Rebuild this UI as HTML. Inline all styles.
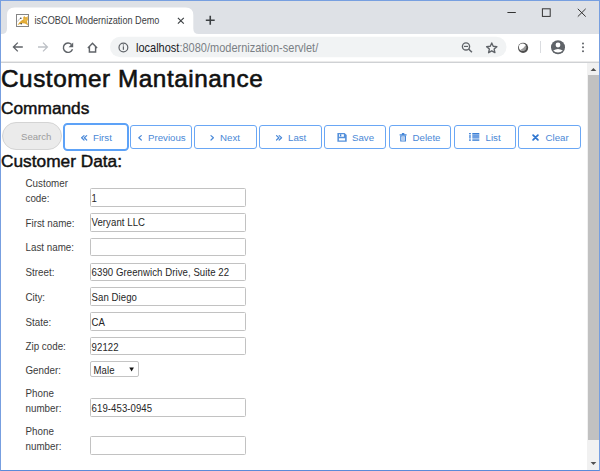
<!DOCTYPE html>
<html><head><meta charset="utf-8">
<style>
*{box-sizing:border-box;margin:0;padding:0}
html,body{width:600px;height:471px;overflow:hidden;background:#fff;font-family:"Liberation Sans",sans-serif}
.a{position:absolute}
.t{position:absolute;white-space:pre;line-height:1}
#frame{left:0;top:0;width:600px;height:471px;border:1px solid #779fe0;border-bottom-color:#5b8bd9}
#strip{left:1px;top:1px;width:598px;height:32px;background:#dee1e6}
#tab{left:7px;top:7px;width:186px;height:27px;background:#fff;border-radius:7px 7px 0 0}
#toolbar{left:1px;top:33px;width:598px;height:28px;background:#fff}
#tbline{left:1px;top:61px;width:598px;height:1px;background:#d7d9dc}
#omni{left:110px;top:37px;width:397px;height:21px;background:#f1f3f4;border-radius:11px}
.btn{position:absolute;top:125px;width:62px;height:24px;border:1px solid #6aa7f5;border-radius:3px;background:#fff}
.bl{position:absolute;white-space:pre;line-height:1;font-size:9.7px;color:#4a88d6;top:132.6px}
.lbl{position:absolute;white-space:pre;line-height:1;font-size:9.8px;color:#3b3b3b;transform:scaleY(1.13);transform-origin:0 8.3px}
.inp{position:absolute;left:90px;width:155.7px;height:18.5px;border:1px solid #c2c2c2;border-radius:1.5px;background:#fff}
.val{position:absolute;white-space:pre;line-height:1;font-size:9.6px;color:#262626;letter-spacing:0.07px;transform:scaleY(1.1);transform-origin:0 8.1px}
</style></head>
<body>
<svg class="a" style="left:0;top:0" width="600" height="63" viewBox="0 0 600 63">
<rect x="1" y="1" width="598" height="33" fill="#dee1e6"/>
<path d="M1 34 L1.5 34 Q7 34 7 28.5 L7 15 Q7 7.4 14.6 7.4 L185.7 7.4 Q193.3 7.4 193.3 15 L193.3 28.5 Q193.3 34 198.8 34 L599 34 L599 62 L1 62 Z" fill="#fff"/>
<rect x="1" y="61" width="598" height="1" fill="#ebebeb"/>
<rect x="1" y="62" width="598" height="1" fill="#cfd1d4"/>
<!-- favicon -->
<rect x="16.5" y="14.5" width="12" height="12" fill="#fff" stroke="#858585" stroke-width="1"/>
<path d="M23.2 17.6 L24.2 15.9 L25.4 17.3 L26.5 17.3 L27.6 16 L27.9 19.5 L27 21.8 L28.3 25.6 L25 23.6 L22.5 23.2 Q20 23.6 17.4 25.3 Q19.2 22 21.5 20.6 L23.4 19.6 Z" fill="#e0a935"/>
<path d="M24 18.5 L27 18.6 L26.5 21.5 L24.5 21.8 Z" fill="#f0c050" opacity="0.7"/>
<path d="M17.6 21.6 Q18.8 19 20.6 18.3" stroke="#999" stroke-width="0.6" fill="none"/>
<circle cx="20.8" cy="18.2" r="0.75" fill="#333"/>
<circle cx="21.2" cy="23.8" r="0.75" fill="#333"/>
<!-- tab close -->
<path d="M177.9 17.8 L183.8 23.7 M183.8 17.8 L177.9 23.7" stroke="#3c4043" stroke-width="1.15" fill="none"/>
<!-- new tab + -->
<path d="M210.25 15.8 V24.7 M205.8 20.25 H214.7" stroke="#3c4043" stroke-width="1.6" fill="none"/>
<!-- window controls -->
<rect x="507.4" y="12" width="8.4" height="1" fill="#333"/>
<rect x="542.4" y="8.8" width="7.8" height="7.6" fill="none" stroke="#333" stroke-width="1"/>
<path d="M577.8 8.8 L585.7 16.6 M585.7 8.8 L577.8 16.6" stroke="#333" stroke-width="1" fill="none"/>
<!-- nav icons -->
<path d="M22.8 47 H13.6 M17.8 42.6 L13.4 47 L17.8 51.4" stroke="#5f6368" stroke-width="1.3" fill="none"/>
<path d="M38 47 H47.2 M43 42.6 L47.4 47 L43 51.4" stroke="#bdc1c6" stroke-width="1.3" fill="none"/>
<path d="M71.5 44.4 A4.7 4.7 0 1 0 72.5 49.3" stroke="#5f6368" stroke-width="1.45" fill="none"/>
<path d="M73.2 42.6 V47.2 H68.6 Z" fill="#5f6368"/>
<path d="M87.9 47.9 L92.5 43.3 L97.1 47.9 M89.4 46.5 V52 H95.6 V46.5" stroke="#5f6368" stroke-width="1.45" fill="none" stroke-linejoin="miter"/>
<!-- omnibox -->
<rect x="110" y="36.8" width="396.5" height="20.4" rx="10.2" fill="#f1f3f4"/>
<circle cx="123.4" cy="47.5" r="4.4" fill="none" stroke="#5f6368" stroke-width="1.2"/>
<rect x="122.8" y="46.3" width="1.2" height="3.5" fill="#5f6368"/>
<rect x="122.8" y="44.4" width="1.2" height="1.1" fill="#5f6368"/>
<!-- zoom icon -->
<circle cx="466" cy="46.4" r="3.6" fill="none" stroke="#5f6368" stroke-width="1.35"/>
<path d="M468.6 49 L471.9 52.3" stroke="#5f6368" stroke-width="1.5"/>
<path d="M464 46.4 H468" stroke="#5f6368" stroke-width="1.15"/>
<!-- star -->
<path d="M491.75 42.90 L493.22 46.28 L496.89 46.63 L494.13 49.07 L494.92 52.67 L491.75 50.80 L488.58 52.67 L489.37 49.07 L486.61 46.63 L490.28 46.28 Z" fill="none" stroke="#5f6368" stroke-width="1.35" stroke-linejoin="round"/>
<!-- extension ball -->
<circle cx="523.1" cy="47.8" r="5.1" fill="#4d4d4d"/>
<circle cx="522.5" cy="47.1" r="3.6" fill="#fff"/>
<path d="M525.6 45.2 A3.6 3.6 0 0 1 520.3 50 Q523.6 48.6 525.6 45.2 Z" fill="#9a9a9a"/>
<rect x="540" y="41" width="1" height="12" fill="#dadce0"/>
<!-- profile -->
<circle cx="558" cy="47.3" r="7" fill="#5f6368"/>
<circle cx="558" cy="45" r="2.4" fill="#fff"/>
<path d="M553.2 50.6 Q558 47.6 562.8 50.6 Q560.9 52.6 558 52.6 Q555.1 52.6 553.2 50.6 Z" fill="#fff"/>
<circle cx="583" cy="43.5" r="1" fill="#5f6368"/>
<circle cx="583" cy="47.3" r="1" fill="#5f6368"/>
<circle cx="583" cy="51.2" r="1" fill="#5f6368"/>
</svg>
<div class="t" style="left:34.5px;top:16.3px;font-size:9.15px;color:#3c4043;transform:scaleY(1.13);transform-origin:0 0">isCOBOL Modernization Demo</div>
<div class="t" style="left:136px;top:43.1px;font-size:11px;color:#202124;transform:scaleY(1.08);transform-origin:0 9.3px">localhost<span style="color:#7a7f85">:8080/modernization-servlet/</span></div>

<!-- headings -->
<div class="t" style="left:1px;top:67.4px;font-size:24.3px;letter-spacing:0.55px;color:#111;-webkit-text-stroke:0.6px #111">Customer Mantainance</div>
<div class="t" style="left:1px;top:100.2px;font-size:17.3px;color:#111;-webkit-text-stroke:0.45px #111">Commands</div>
<div class="t" style="left:1px;top:153.4px;font-size:17.3px;color:#111;-webkit-text-stroke:0.45px #111">Customer Data:</div>

<!-- search pill -->
<div class="a" style="left:1.5px;top:122.3px;width:60.5px;height:27.5px;border:1px solid #d4d4d4;border-radius:14px;background:#ebebeb"></div>
<div class="t" style="left:21px;top:132px;font-size:9.6px;color:#9c9c9c">Search</div>

<!-- buttons -->
<div class="a" style="left:63px;top:123px;width:66px;height:28px;border:2px solid #5da2f7;border-radius:4.5px;box-shadow:inset 0 0 0 0.6px rgba(93,162,247,.55)"></div>
<div class="btn" style="left:65.3px;border-color:transparent"></div>
<div class="btn" style="left:130px;width:62px"></div>
<div class="btn" style="left:194px;width:63px"></div>
<div class="btn" style="left:259px;width:63px"></div>
<div class="btn" style="left:324px;width:62px"></div>
<div class="btn" style="left:389px;width:62px"></div>
<div class="btn" style="left:454px;width:62px"></div>
<div class="btn" style="left:518px;width:63px"></div>

<div class="bl" style="left:93px">First</div>
<div class="bl" style="left:148px">Previous</div>
<div class="bl" style="left:220px">Next</div>
<div class="bl" style="left:288px">Last</div>
<div class="bl" style="left:352px">Save</div>
<div class="bl" style="left:412.5px">Delete</div>
<div class="bl" style="left:485.5px">List</div>
<div class="bl" style="left:545.5px">Clear</div>

<svg class="a" style="left:0;top:120px" width="600" height="35" viewBox="0 120 600 35">
<g fill="none" stroke="#4a89d8" stroke-width="1.2" stroke-linecap="round" stroke-linejoin="round">
<path d="M84 135.6 L81.6 137.8 L84 140 M86.7 135.6 L84.3 137.8 L86.7 140"/>
<path d="M141.3 135.6 L138.8 137.8 L141.3 140"/>
<path d="M211 135.6 L213.4 137.8 L211 140"/>
<path d="M276.5 135.6 L278.9 137.8 L276.5 140 M279.2 135.6 L281.6 137.8 L279.2 140"/>
</g>
<path d="M337.4 133 H344.6 L346.7 135.1 V141.8 H337.4 Z M339 134.3 V136.7 H343.9 V134.3 Z M338.9 138.3 V140.5 H345.1 V138.3 Z" fill="#5591db" fill-rule="evenodd"/>
<rect x="339.9" y="134.3" width="1.4" height="2.1" fill="#3f7fd3"/>
<path d="M401.9 133.1 H404.3 V134.3 H406.6 V135.6 H399.6 V134.3 H401.9 Z" fill="#4586d8"/>
<path d="M400.2 135.6 H406 V141.6 H400.2 Z M401.4 136.6 V140.5 H404.8 V136.6 Z" fill="#4586d8" fill-rule="evenodd"/>
<rect x="401.4" y="136.6" width="3.4" height="3.9" fill="#b4cdef"/>
<rect x="469" y="133" width="1.9" height="1.3" fill="#4a88d6"/>
<rect x="469" y="135" width="1.9" height="3.6" fill="#7aa9e6"/>
<rect x="469" y="139.4" width="1.9" height="1.4" fill="#4a88d6"/>
<rect x="472.3" y="133" width="7" height="1.3" fill="#3a7fd5"/>
<rect x="472.3" y="134.3" width="7" height="4.3" fill="#6d9fe2"/>
<rect x="472.3" y="139.4" width="7" height="1.4" fill="#3a7fd5"/>
<path d="M533.1 135.2 L537.9 139.8 M537.9 135.2 L533.1 139.8" stroke="#2f76d0" stroke-width="1.8" stroke-linecap="round"/>
</svg>

<!-- labels -->
<div class="lbl" style="left:25.5px;top:179.1px">Customer</div>
<div class="lbl" style="left:25.5px;top:193.6px">code:</div>
<div class="lbl" style="left:25.5px;top:218.6px">First name:</div>
<div class="lbl" style="left:25.5px;top:243.3px">Last name:</div>
<div class="lbl" style="left:25.5px;top:268.1px">Street:</div>
<div class="lbl" style="left:25.5px;top:292.9px">City:</div>
<div class="lbl" style="left:25.5px;top:317.6px">State:</div>
<div class="lbl" style="left:25.5px;top:342.4px">Zip code:</div>
<div class="lbl" style="left:25.5px;top:366.1px">Gender:</div>
<div class="lbl" style="left:25.5px;top:389.4px">Phone</div>
<div class="lbl" style="left:25.5px;top:403.9px">number:</div>
<div class="lbl" style="left:25.5px;top:427.3px">Phone</div>
<div class="lbl" style="left:25.5px;top:441.8px">number:</div>

<!-- inputs -->
<div class="inp" style="top:188px"></div>
<div class="inp" style="top:213px"></div>
<div class="inp" style="top:237.8px"></div>
<div class="inp" style="top:262.6px"></div>
<div class="inp" style="top:287.3px"></div>
<div class="inp" style="top:312px"></div>
<div class="inp" style="top:336.8px"></div>
<div class="a" style="left:90.2px;top:361.2px;width:48.8px;height:16px;border:1px solid #c4c4c4;border-radius:2px;background:#fff"></div>
<div class="inp" style="top:398.2px"></div>
<div class="inp" style="top:436.2px"></div>

<div class="val" style="left:91.6px;top:193.5px">1</div>
<div class="val" style="left:91.5px;top:218.3px">Veryant LLC</div>
<div class="val" style="left:91.6px;top:268.1px">6390 Greenwich Drive, Suite 22</div>
<div class="val" style="left:91.6px;top:292.9px">San Diego</div>
<div class="val" style="left:91.6px;top:317.7px">CA</div>
<div class="val" style="left:91.6px;top:342.5px">92122</div>
<div class="val" style="left:93.5px;top:366.0px">Male</div>
<div class="val" style="left:91.6px;top:404.0px">619-453-0945</div>

<svg class="a" style="left:120px;top:360px" width="20" height="20" viewBox="120 360 20 20"><path d="M129.3 367.4 H133.9 L131.6 371.6 Z" fill="#111"/></svg>
<!-- scrollbar -->
<div class="a" style="left:587px;top:63px;width:12px;height:407px;background:#f1f1f1"></div>
<div class="a" style="left:588px;top:75px;width:10.5px;height:365px;background:#c1c1c1"></div>
<svg class="a" style="left:587px;top:63px" width="12" height="407" viewBox="587 63 12 407">
<path d="M590.6 70.9 L593.45 67.9 L596.3 70.9 Z" fill="#505050"/>
<path d="M590.6 461.9 L593.45 465 L596.3 461.9 Z" fill="#505050"/>
</svg>
<div id="frame" class="a"></div>
</body></html>
